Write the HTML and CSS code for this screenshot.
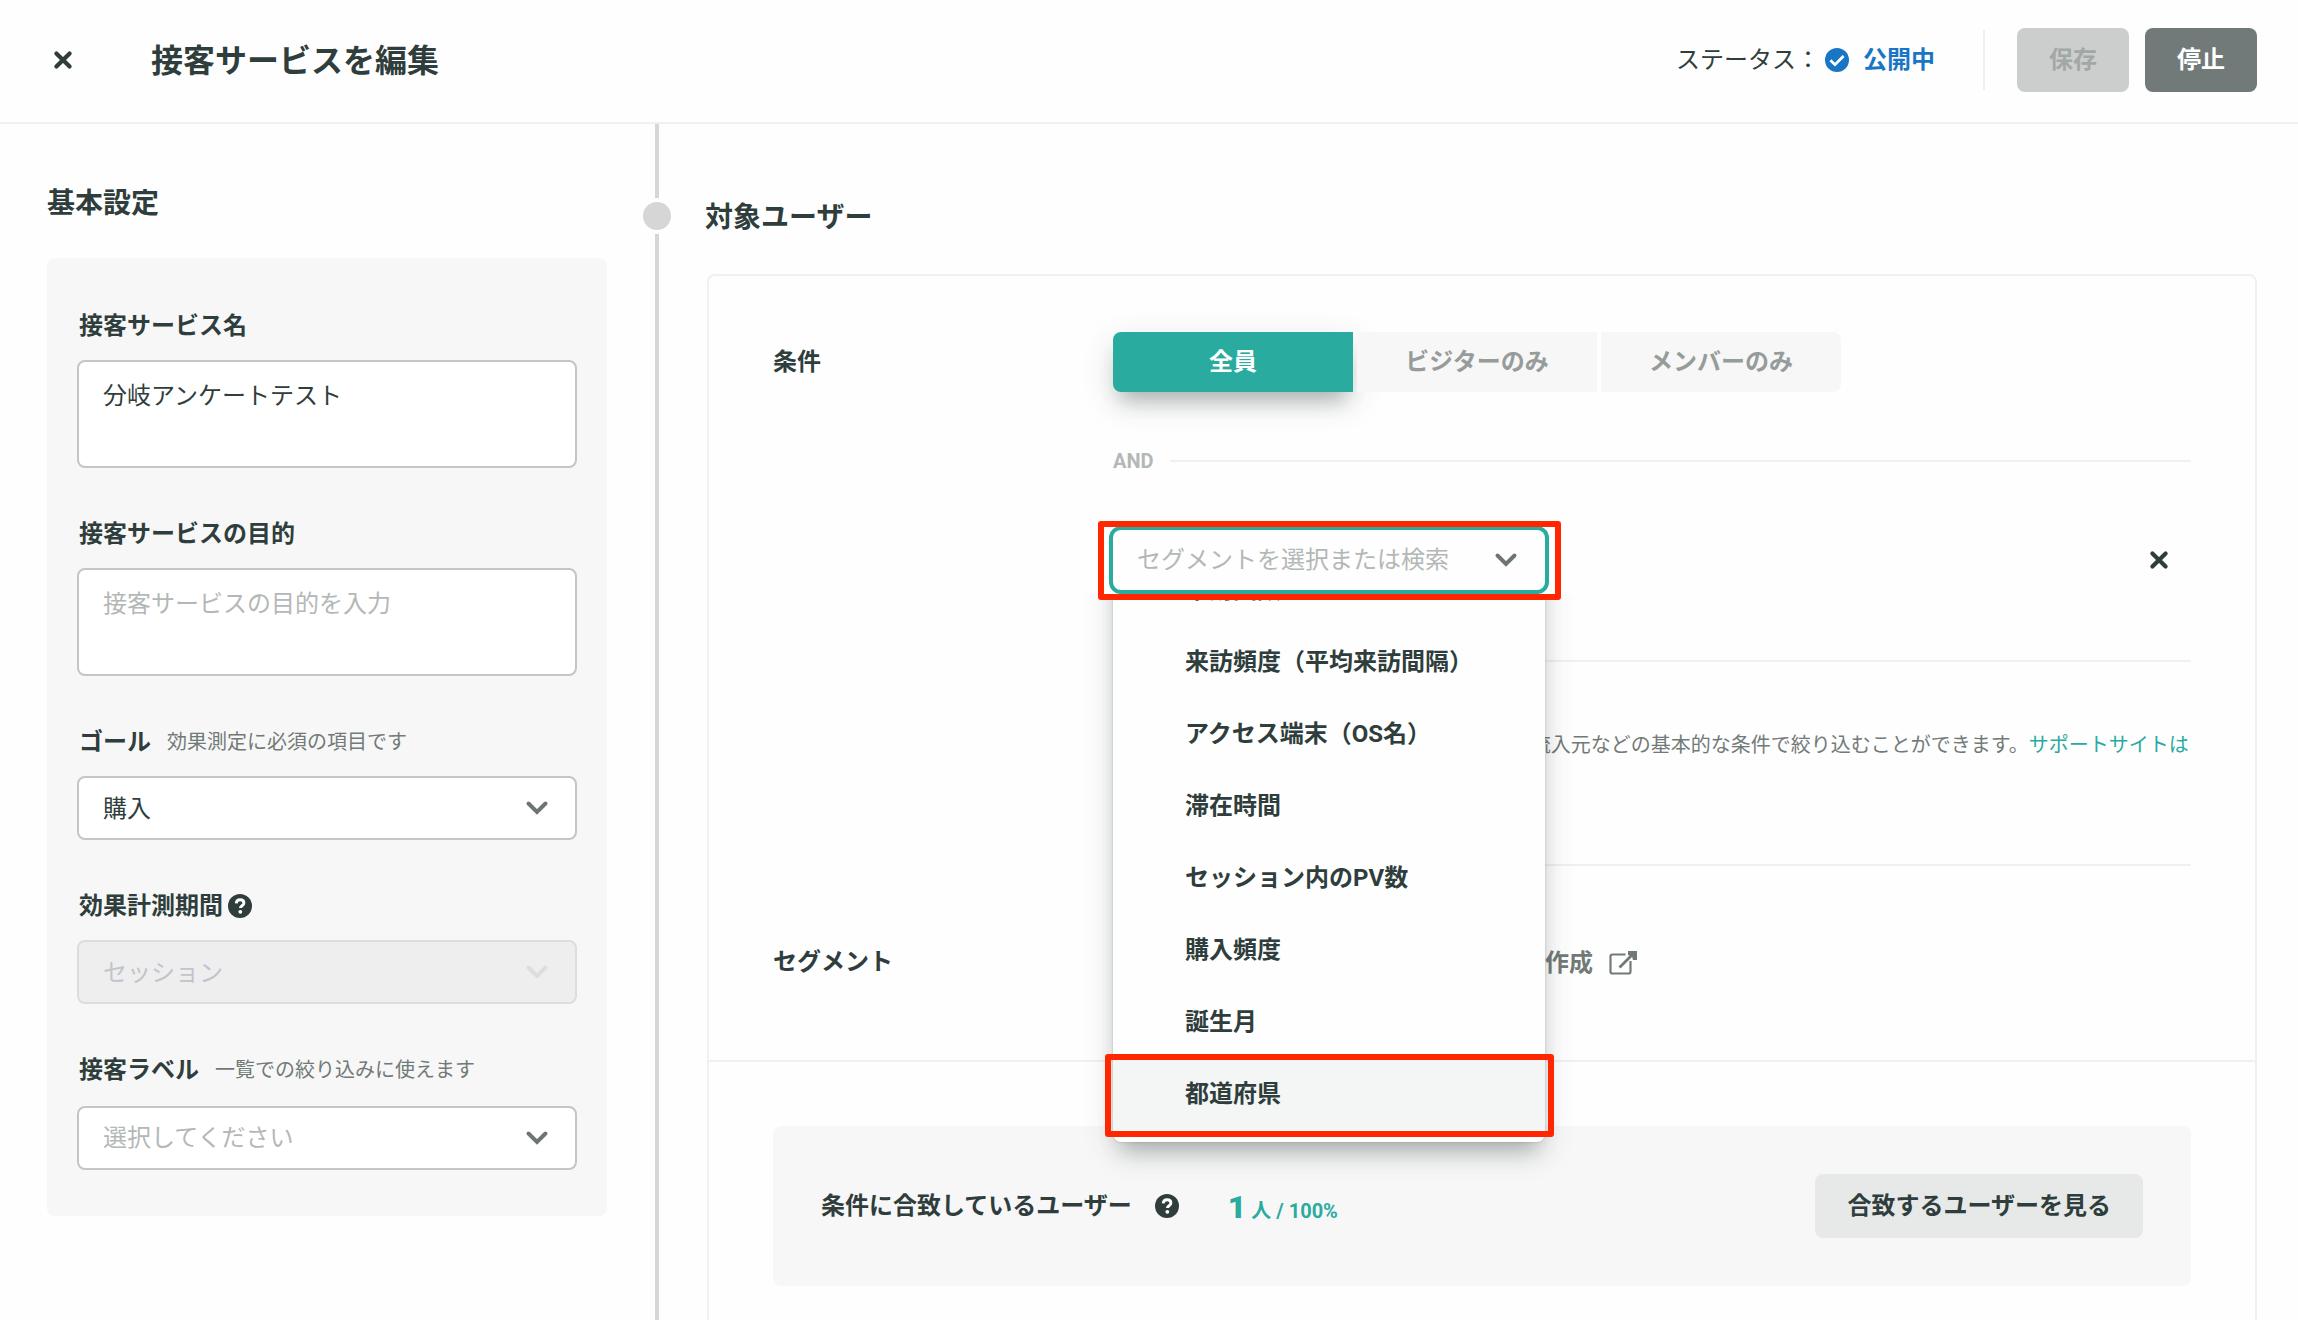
FILE: index.html
```html
<!DOCTYPE html>
<html lang="ja">
<head>
<meta charset="utf-8">
<meta name="viewport" content="width=device-width, initial-scale=1">
<title>接客サービスを編集</title>
<link rel="stylesheet" href="styles.css">
</head>
<body>
<svg class="sprite" aria-hidden="true">
  <symbol id="icon-close" viewBox="0 0 20 20"><path d="M3.400 3.400 16.600 16.600M16.600 3.400 3.400 16.600" fill="none" stroke="currentColor" stroke-width="4.200" stroke-linecap="round"/></symbol>
  <symbol id="icon-chevron" viewBox="0 0 24 24"><path d="M3.500 7.500 12 16 20.500 7.500" fill="none" stroke="currentColor" stroke-width="4" stroke-linecap="round"/></symbol>
  <symbol id="icon-help" viewBox="0 0 24 24"><circle cx="12" cy="12" r="12" fill="currentColor"/><path d="M8.200 9.300c.2-2.300 1.700-3.600 3.900-3.600 2.200 0 3.800 1.300 3.800 3.200 0 2.900-3.500 2.800-3.500 5.200" fill="none" stroke="#fff" stroke-width="2.900"/><circle cx="12.300" cy="17.800" r="1.900" fill="#fff"/></symbol>
  <symbol id="icon-check" viewBox="0 0 24 24"><circle cx="12" cy="12" r="12" fill="currentColor"/><path d="M5.400 12.200 10 16.700 18.600 8" fill="none" stroke="#fff" stroke-width="2.700"/></symbol>
  <symbol id="icon-external" viewBox="0 0 28 26"><path d="M16.500 4.500H3.500Q1.500 4.500 1.500 6.500v15Q1.500 23.500 3.500 23.500h16Q21.500 23.500 21.500 21.500V11" fill="none" stroke="currentColor" stroke-width="2.200"/><path d="M10.500 17.500 25 3" fill="none" stroke="currentColor" stroke-width="2.800"/><path d="M19 1h9v9h-4l-1-3.500-4-1.500z" fill="currentColor"/></symbol>
</svg>

<div class="app">
  <header class="topbar">
    <button class="icon-button" type="button" aria-label="閉じる"><svg class="close"><use href="#icon-close"/></svg></button>
    <h1 class="topbar-title">接客サービスを編集</h1>
    <div class="status">
      <span>ステータス：</span>
      <svg class="round-icon status-icon"><use href="#icon-check"/></svg>
      <strong class="status-value">公開中</strong>
    </div>
    <div class="topbar-actions">
      <button class="button button-save" type="button" disabled>保存</button>
      <button class="button button-stop" type="button">停止</button>
    </div>
  </header>

  <div class="workspace">
    <aside class="sidebar">
      <h2 class="section-title">基本設定</h2>
      <form class="settings">
        <div class="field">
          <label class="field-label" for="service-name">接客サービス名</label>
          <textarea class="control textarea" id="service-name">分岐アンケートテスト</textarea>
        </div>
        <div class="field">
          <label class="field-label" for="service-purpose">接客サービスの目的</label>
          <textarea class="control textarea" id="service-purpose" placeholder="接客サービスの目的を入力"></textarea>
        </div>
        <div class="field">
          <div class="field-head"><label class="field-label" for="goal">ゴール</label><span class="hint">効果測定に必須の項目です</span></div>
          <div class="select-wrap">
            <select class="control select" id="goal"><option>購入</option></select>
            <svg class="chevron"><use href="#icon-chevron"/></svg>
          </div>
        </div>
        <div class="field">
          <div class="field-head field-head-tight"><label class="field-label" for="period">効果計測期間</label><svg class="round-icon"><use href="#icon-help"/></svg></div>
          <div class="select-wrap">
            <select class="control select" id="period" disabled><option>セッション</option></select>
            <svg class="chevron chevron-disabled"><use href="#icon-chevron"/></svg>
          </div>
        </div>
        <div class="field field-last">
          <div class="field-head"><label class="field-label" for="tag">接客ラベル</label><span class="hint">一覧での絞り込みに使えます</span></div>
          <div class="select-wrap">
            <select class="control select select-empty" id="tag"><option>選択してください</option></select>
            <svg class="chevron"><use href="#icon-chevron"/></svg>
          </div>
        </div>
      </form>
    </aside>

    <div class="timeline" aria-hidden="true">
      <span class="timeline-lead"></span>
      <span class="timeline-dot"></span>
      <span class="timeline-line"></span>
    </div>

    <main class="target">
      <h2 class="section-title">対象ユーザー</h2>
      <section class="card">
        <div class="conditions">
          <h3 class="row-label">条件</h3>
          <div class="row-body">
            <div class="tabs">
              <button class="tab tab-active" type="button">全員</button>
              <button class="tab" type="button">ビジターのみ</button>
              <button class="tab" type="button">メンバーのみ</button>
            </div>
            <div class="and"><span>AND</span></div>
            <div class="segment-row">
              <div class="combo">
                <input class="combo-input" type="text" placeholder="セグメントを選択または検索" aria-label="セグメントを選択または検索">
                <svg class="chevron combo-chevron"><use href="#icon-chevron"/></svg>
                <ul class="menu" role="listbox" aria-label="セグメント">
                  <li class="menu-item" role="option">来訪回数</li>
                  <li class="menu-item" role="option">来訪頻度（平均来訪間隔）</li>
                  <li class="menu-item" role="option">アクセス端末（OS名）</li>
                  <li class="menu-item" role="option">滞在時間</li>
                  <li class="menu-item" role="option">セッション内のPV数</li>
                  <li class="menu-item" role="option">購入頻度</li>
                  <li class="menu-item" role="option">誕生月</li>
                  <li class="menu-item menu-item-hover" role="option">都道府県</li>
                </ul>
                <span class="callout callout-input"></span>
                <span class="callout callout-option"></span>
              </div>
              <button class="icon-button segment-remove" type="button" aria-label="削除"><svg class="close"><use href="#icon-close"/></svg></button>
            </div>
            <p class="description">セグメントを使用して、アクセスした CM 名や流入元などの基本的な条件で絞り込むことができます。<a class="link" href="#support">サポートサイトはこちら</a></p>
          </div>

          <h3 class="row-label segment-label">セグメント</h3>
          <div class="row-body segment-create">
            <a class="create-link" href="#create">新規セグメントを作成<svg class="external"><use href="#icon-external"/></svg></a>
          </div>
        </div>

        <div class="summary">
          <div class="match">
            <span class="match-label">条件に合致しているユーザー</span>
            <svg class="round-icon match-help"><use href="#icon-help"/></svg>
            <span class="match-count"><b class="match-number">1</b> 人 / 100%</span>
            <button class="button button-users" type="button">合致するユーザーを見る</button>
          </div>
        </div>
      </section>
    </main>
  </div>
</div>
</body>
</html>
```

FILE: styles.css
```css
:root {
  --ink: #2f3e3c;
  --muted: #727a78;
  --faint: #b3b8b6;
  --teal: #2aab9f;
  --line: #f0f0f0;
  --panel: #f7f7f7;
  --shadow: 0 16px 20px -8px rgba(47, 62, 60, .3), 0 10px 32px rgba(47, 62, 60, .16);
}

*,
*::before,
*::after {
  box-sizing: border-box;
}

body {
  margin: 0;
  background: #fefefe;
  color: var(--ink);
  font: 400 24px/32px Roboto, "Noto Sans CJK JP", sans-serif;
}

h1, h2, h3, p, ul {
  margin: 0;
  padding: 0;
}

ul {
  list-style: none;
}

button, input, select, textarea {
  margin: 0;
  font: inherit;
  color: inherit;
}

a {
  text-decoration: none;
}

svg {
  display: block;
  flex: none;
}

.sprite {
  position: absolute;
  width: 0;
  height: 0;
}

.app {
  display: flex;
  flex-direction: column;
  height: 100vh;
  overflow: hidden;
}

/* Top bar */
.topbar {
  display: flex;
  align-items: center;
  padding: 28px 41px 30px 53px;
  border-bottom: 2px solid var(--line);
}

.icon-button {
  padding: 0;
  border: 0;
  background: none;
}

.close {
  width: 20px;
  height: 20px;
}

.topbar-title {
  margin-left: 78px;
  padding-top: 2px;
  font-size: 32px;
  line-height: 48px;
}

.status {
  display: flex;
  align-items: center;
  margin-left: auto;
}

.round-icon {
  width: 24px;
  height: 24px;
}

.status-icon {
  margin: 0 14px 0 5px;
  color: #1976c5;
}

.status-value {
  color: #1976c5;
}

.topbar-actions {
  display: flex;
  align-items: center;
  gap: 16px;
  margin-left: 48px;
}

.topbar-actions::before {
  content: "";
  width: 2px;
  height: 60px;
  margin-right: 16px;
  background: var(--line);
}

.button {
  padding: 16px 32px;
  border: 0;
  border-radius: 8px;
  font-weight: 700;
}

.button-save {
  background: #cccecd;
  color: #a2a8a6;
}

.button-stop {
  background: #727a79;
  color: #fff;
}

/* Two-column workspace */
.workspace {
  display: grid;
  grid-template-columns: 643px 28px 1fr;
  flex: 1;
  min-height: 0;
}

.section-title {
  font-size: 28px;
  line-height: 44px;
}

.sidebar {
  padding: 58px 36px 0 47px;
}

.settings {
  display: flex;
  flex-direction: column;
  gap: 50px;
  margin-top: 32px;
  padding: 52px 30px 46px;
  border-radius: 8px;
  background: var(--panel);
}

.field {
  display: flex;
  flex-direction: column;
  gap: 18px;
}

.field-last {
  gap: 20px;
}

.field-head {
  display: flex;
  align-items: center;
  gap: 16px;
}

.field-head-tight {
  gap: 5px;
}

.field-label {
  padding-left: 2px;
  font-weight: 700;
}

.hint {
  color: var(--muted);
  font-size: 20px;
}

.control {
  display: block;
  width: 100%;
  border: 2px solid #c4c6c5;
  border-radius: 8px;
  background: #fff;
  padding: 0 24px;
}

.textarea {
  height: 108px;
  padding-top: 18px;
  resize: none;
}

::placeholder {
  color: var(--faint);
  opacity: 1;
}

.select-wrap {
  position: relative;
}

.select {
  height: 64px;
  padding-top: 2px;
  appearance: none;
}

.select:disabled {
  border-color: #dcdedd;
  background: #eee;
  color: #c0c4cc;
  opacity: 1;
}

.select-empty {
  padding-top: 0;
  color: var(--faint);
}

.chevron {
  position: absolute;
  top: 20px;
  right: 28px;
  width: 24px;
  height: 24px;
  color: #6e7674;
  pointer-events: none;
}

.chevron-disabled {
  color: #dcdedd;
}

/* Step line between the columns */
.timeline {
  display: flex;
  flex-direction: column;
  align-items: center;
  gap: 4px;
}

.timeline-lead,
.timeline-line {
  width: 4px;
  background: #d6d6d6;
}

.timeline-lead {
  height: 74px;
}

.timeline-line {
  flex: 1;
}

.timeline-dot {
  width: 28px;
  height: 28px;
  border-radius: 50%;
  background: #d6d6d6;
}

/* Target users */
.target {
  padding: 72px 41px 0 34px;
}

.card {
  margin: 34px 0 0 2px;
  padding-bottom: 64px;
  border: 2px solid var(--line);
  border-radius: 8px;
}

.conditions {
  display: grid;
  grid-template-columns: 340px 1fr;
  padding: 56px 64px 0;
  border-bottom: 2px solid var(--line);
}

.row-label {
  font-size: 24px;
  line-height: 60px;
}

.tabs {
  display: flex;
  gap: 4px;
}

.tab {
  width: 240px;
  height: 60px;
  padding: 0;
  border: 0;
  background: var(--panel);
  color: #969c9a;
  font-weight: 700;
}

.tab:last-child {
  border-radius: 0 8px 8px 0;
}

.tab-active {
  border-radius: 8px 0 0 8px;
  background: var(--teal);
  color: #fff;
  box-shadow: var(--shadow);
}

.and {
  display: flex;
  align-items: center;
  gap: 16px;
  margin: 58px 0;
  color: var(--faint);
  font-size: 20px;
  font-weight: 700;
  line-height: 22px;
}

.and::after {
  content: "";
  flex: 1;
  height: 2px;
  background: var(--line);
}

.segment-row {
  display: flex;
  align-items: center;
  justify-content: space-between;
  padding-bottom: 70px;
  border-bottom: 2px solid var(--line);
}

.segment-remove {
  margin-right: 22px;
}

.combo {
  position: relative;
  z-index: 1;
  width: 432px;
}

.combo-input {
  position: relative;
  z-index: 2;
  display: block;
  width: 100%;
  height: 60px;
  padding: 0 64px 0 24px;
  border: 0;
  border-radius: 8px;
  background: #fefefe;
  box-shadow: 0 0 0 4px var(--teal);
}

.combo-chevron {
  z-index: 2;
  top: 18px;
  right: 27px;
}

.menu {
  position: absolute;
  top: 24px;
  left: 0;
  right: 0;
  padding-bottom: 12px;
  border-radius: 0 0 8px 8px;
  background: #fefefe;
  box-shadow: 0 0 2px rgba(47, 62, 60, .3), var(--shadow);
  clip-path: inset(40px -60px -60px);
}

.menu-item {
  padding: 20px 72px;
  font-weight: 700;
}

.menu-item-hover {
  background: #f4f6f6;
}

.callout {
  position: absolute;
  z-index: 3;
  border: 6px solid #ff2600;
  border-radius: 3px;
  pointer-events: none;
}

.callout-input {
  inset: -9px -16px -10px -15px;
}

.callout-option {
  top: 524px;
  left: -8px;
  right: -9px;
  height: 83px;
}

.description {
  padding: 68px 0 74px;
  border-bottom: 2px solid var(--line);
  color: var(--muted);
  font-size: 20px;
  line-height: 30px;
}

.link {
  color: var(--teal);
}

.segment-label {
  padding-top: 66px;
}

.segment-create {
  height: 194px;
  padding-left: 240px;
  display: flex;
  align-items: center;
}

.create-link {
  display: flex;
  align-items: center;
  gap: 16px;
  color: var(--muted);
  font-weight: 700;
}

.external {
  width: 28px;
  height: 26px;
}

/* Matching users */
.summary {
  padding: 64px 64px 0;
}

.match {
  display: flex;
  align-items: center;
  padding: 48px;
  border-radius: 8px;
  background: var(--panel);
}

.match-label {
  font-weight: 700;
}

.match-help {
  margin: 0 49px 0 23px;
}

.match-count {
  padding-top: 6px;
  color: var(--teal);
  font-size: 20px;
  font-weight: 700;
}

.match-number {
  font-size: 32px;
}

.button-users {
  margin-left: auto;
  background: #e7e9e8;
}
```
